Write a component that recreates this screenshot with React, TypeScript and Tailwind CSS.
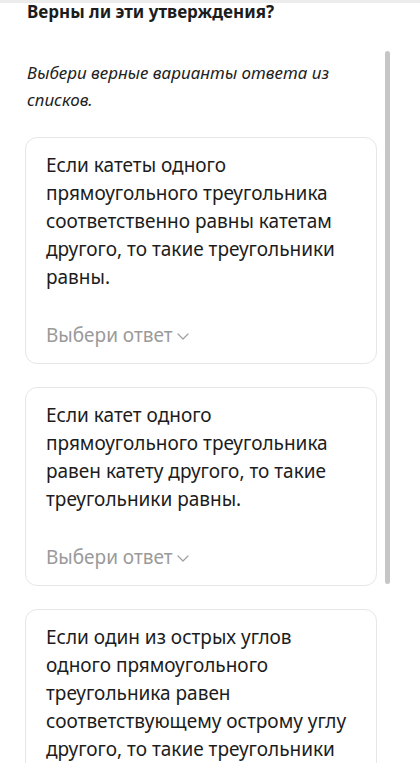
interface Istatement {
  id: number
  text: string
}

const statements: Istatement[] = [
  {
    id: 1,
    text: "Если катеты одного прямоугольного треугольника соответственно равны катетам другого, то такие треугольники равны.",
  },
  {
    id: 2,
    text: "Если катет одного прямоугольного треугольника равен катету другого, то такие треугольники равны.",
  },
  {
    id: 3,
    text: "Если один из острых углов одного прямоугольного треугольника равен соответствующему острому углу другого, то такие треугольники равны.",
  },
]

export default function App() {
  return (
    <div className="w-[420px] h-[763px] overflow-hidden bg-white font-['Noto_Sans',sans-serif] text-[#1c1c1c]">
      {/* top strip */}
      <div className="h-[3px] bg-[#ececec]" />
      <h1 className="pl-[27px] text-[17px] font-bold leading-[18px]">Верны ли эти утверждения?</h1>

      <div className="relative mt-[30px]">
        {/* scrollbar */}
        <div className="absolute left-[385px] top-[0px] w-[5px] h-[533px] rounded-full bg-[#c6c6c6]" />

        <p className="pl-[27px] pr-[60px] italic text-[17px] leading-[27px] text-[#222] pt-[8px]">
          Выбери верные варианты ответа из списков.
        </p>

        <div className="flex flex-col gap-[23px] mt-[24px] pl-[25px] w-[377px]">
          {statements.map((item) => (
            <div key={item.id} className="rounded-[12px] border border-[#e6e6e6] pl-[20px] pr-[18px] pt-[13px] pb-[14px]">
              <p className="text-[19px] leading-[28px]">{item.text}</p>
              <div className="flex items-center mt-[30px] text-[19px] leading-[28px] text-[#9a9a9a]">
                Выбери ответ
                <svg className="ml-[4px] mt-[2px]" width="12" height="7" viewBox="0 0 12 7" fill="none">
                  <path d="M1 1 L6 6 L11 1" stroke="#a0a0a0" strokeWidth="1.2" strokeLinecap="round" strokeLinejoin="round" />
                </svg>
              </div>
            </div>
          ))}
        </div>
      </div>
    </div>
  )
}
